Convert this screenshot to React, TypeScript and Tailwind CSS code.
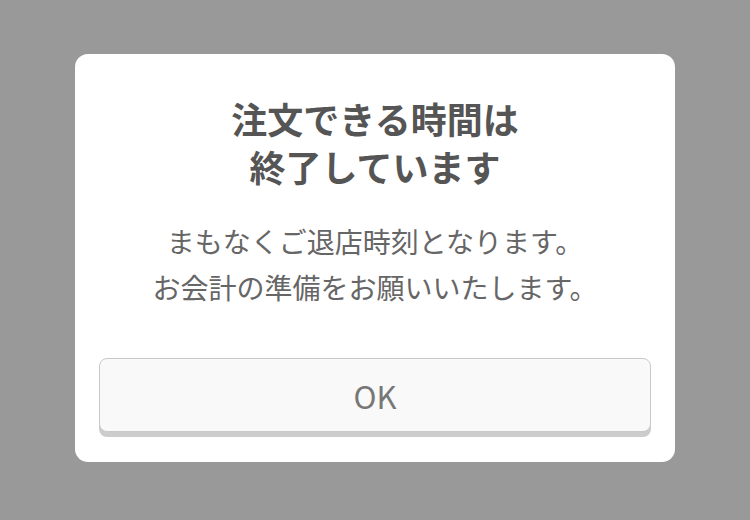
import React from "react";

export default function App() {
  return (
    <div
      className="w-[750px] h-[520px] bg-[#999999] flex justify-center pt-[54px]"
      style={{ fontFamily: '"Noto Sans CJK JP", "Noto Sans", sans-serif' }}
    >
      <div className="w-[600px] h-[408px] bg-white rounded-[13px] px-6 pt-[40px] pb-[30px] flex flex-col items-center">
        <h1 className="text-[36px] leading-[48px] font-bold text-[#555555] text-center">
          注文できる時間は
          <br />
          終了しています
        </h1>
        <p className="mt-[28px] text-[28px] leading-[46px] text-[#666666] text-center">
          まもなくご退店時刻となります。
          <br />
          お会計の準備をお願いいたします。
        </p>
        <button className="mt-auto w-full h-[74px] shrink-0 rounded-[8px] border border-[#c9c9c9] bg-[#f9f9f9] shadow-[0_5px_0_#cccccc] pt-[3px] text-[31px] text-[#777777]">
          OK
        </button>
      </div>
    </div>
  );
}
